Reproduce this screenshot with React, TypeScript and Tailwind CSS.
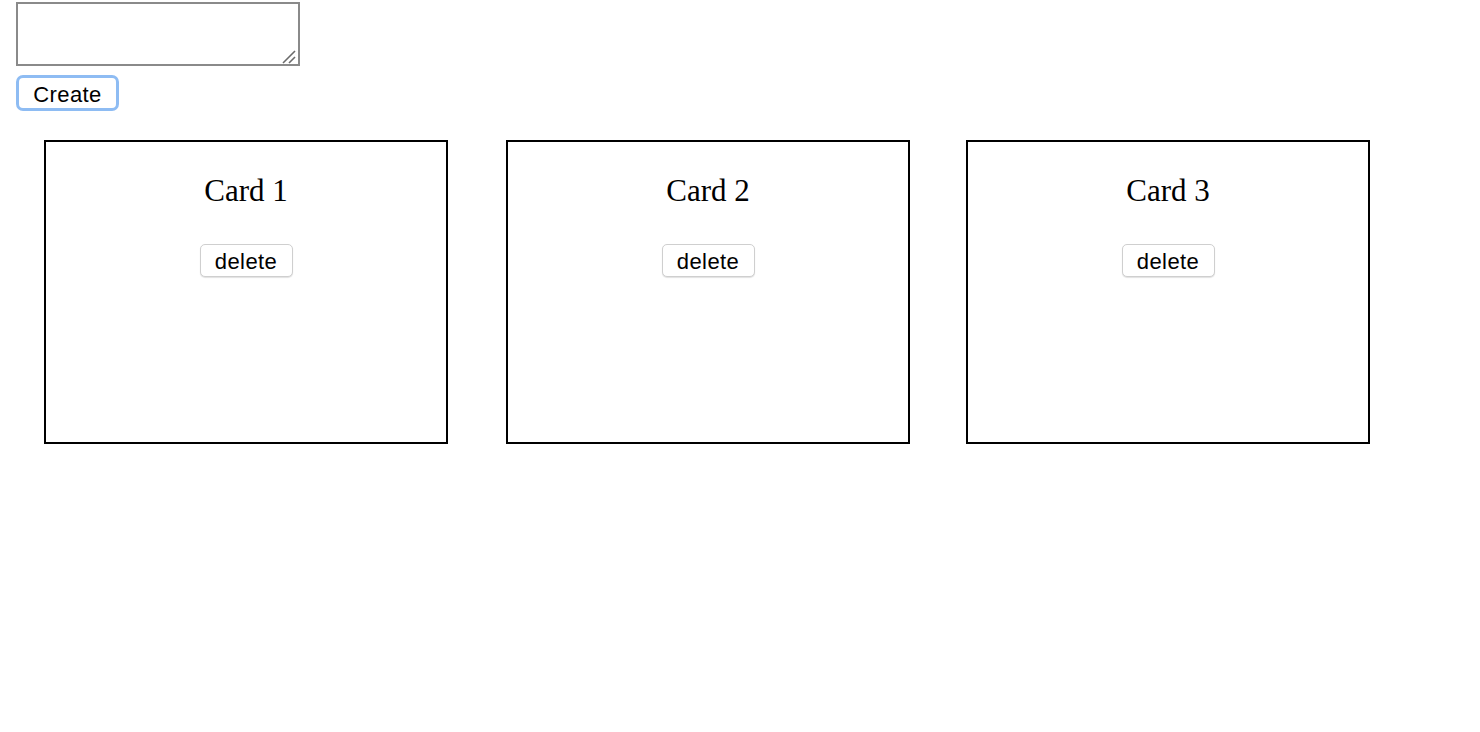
import React from "react";

function Card({ title, className }: { title: string; className?: string }) {
  return (
    <div
      className={
        "w-[404px] h-[304px] border-2 border-black flex flex-col items-center shrink-0 " +
        (className ?? "")
      }
    >
      <div
        className="mt-[30px] text-[31px] leading-[38px] text-black"
        style={{ fontFamily: '"Liberation Serif", "Times New Roman", serif' }}
      >
        {title}
      </div>
      <button
        className="mt-[34px] w-[93px] h-[33px] rounded-[5px] border border-[#cfcfcf] bg-white shadow-[0_1px_1px_rgba(0,0,0,0.12)] text-[22px] leading-none tracking-[0.4px] text-black flex items-center justify-center pt-[3px]"
        style={{ fontFamily: '"Liberation Sans", Arial, sans-serif' }}
      >
        delete
      </button>
    </div>
  );
}

export default function App() {
  return (
    <div className="w-[1480px] h-[732px] bg-white relative">
      <div className="pl-[16px] pt-[2px] flex flex-col items-start">
        <div className="relative w-[284px] h-[64px]">
          <textarea className="w-[284px] h-[64px] border-2 border-[#8a8a8a] bg-white block outline-none resize-none" />
          <svg
            className="absolute right-[3px] bottom-[2px] pointer-events-none"
            width="16"
            height="16"
            viewBox="0 0 16 16"
          >
            <line x1="2" y1="15" x2="14" y2="3" stroke="#6b6b6b" strokeWidth="1.6" />
            <line x1="8" y1="15" x2="14" y2="9" stroke="#6b6b6b" strokeWidth="1.6" />
          </svg>
        </div>
        <button
          className="mt-[9px] w-[103px] h-[36px] rounded-[7px] border-[3px] border-[#8ebcf3] bg-white text-[22px] leading-none tracking-[0.4px] text-black flex items-center justify-center pt-[3px]"
          style={{ fontFamily: '"Liberation Sans", Arial, sans-serif' }}
        >
          Create
        </button>
      </div>
      <div className="flex mt-[29px] pl-[44px]">
        <Card title="Card 1" />
        <Card title="Card 2" className="ml-[58px]" />
        <Card title="Card 3" className="ml-[56px]" />
      </div>
    </div>
  );
}
